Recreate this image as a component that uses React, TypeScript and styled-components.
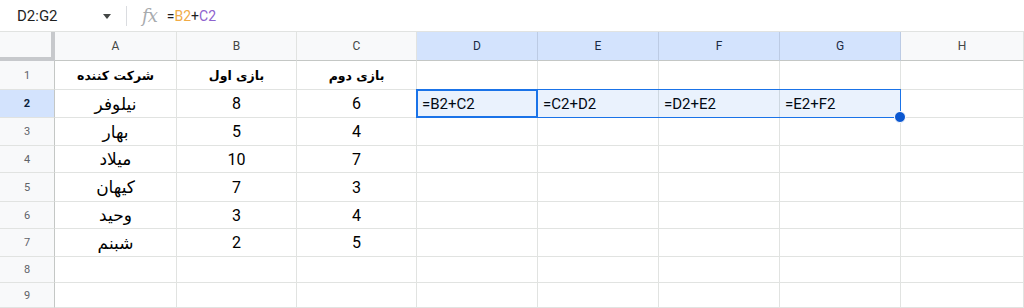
import React from "react"
import styled, { createGlobalStyle } from "styled-components"

const GlobalStyle = createGlobalStyle`
  html, body {
    margin: 0;
    padding: 0;
    background: #fff;
    font-family: Roboto, "Liberation Sans", Arial, sans-serif;
  }
`

const colWidths = [55, 122, 120, 120, 121, 121, 121, 121, 123]
const rowHeights = [29, 29, 28, 28, 27, 29, 27, 28, 26, 25]
const letters = ["A", "B", "C", "D", "E", "F", "G", "H"]

const data: string[][] = [
  ["شرکت کننده", "بازی اول", "بازی دوم", "", "", "", "", ""],
  ["نیلوفر", "8", "6", "=B2+C2", "=C2+D2", "=D2+E2", "=E2+F2", ""],
  ["بهار", "5", "4", "", "", "", "", ""],
  ["میلاد", "10", "7", "", "", "", "", ""],
  ["کیهان", "7", "3", "", "", "", "", ""],
  ["وحید", "3", "4", "", "", "", "", ""],
  ["شبنم", "2", "5", "", "", "", "", ""],
  ["", "", "", "", "", "", "", ""],
  ["", "", "", "", "", "", "", ""],
]

const Page = styled.div`
  width: 1024px;
  height: 308px;
  overflow: hidden;
`

const FormulaBar = styled.div`
  height: 31px;
  display: flex;
  align-items: center;
  border-bottom: 1px solid #e1e3e1;
  font-size: 14px;
  color: #1f1f1f;
`

const NameBox = styled.div`
  width: 86px;
  padding-left: 17px;
  font-size: 15px;
`

const Caret = styled.div`
  width: 0;
  height: 0;
  border-left: 4px solid transparent;
  border-right: 4px solid transparent;
  border-top: 5px solid #444746;
  margin-top: 1px;
`

const Divider = styled.div`
  width: 1px;
  height: 20px;
  background: #dadce0;
  margin: 0 15px 0 15px;
`

const Fx = styled.span`
  font-family: "DejaVu Serif", "Liberation Serif", serif;
  font-style: italic;
  font-size: 18px;
  color: #a8abae;
  letter-spacing: -1px;
  margin-right: 10px;
`

const FormulaText = styled.div`
  font-size: 14px;
  color: #1f1f1f;
`

const Ref = styled.span<{ $color: string }>`
  color: ${({ $color }) => $color};
`

const Grid = styled.div`
  display: grid;
  grid-template-columns: ${colWidths.map(w => `${w}px`).join(" ")};
  grid-template-rows: ${rowHeights.map(h => `${h}px`).join(" ")};
  position: relative;
`

const Placed = styled.div<{ $row: number; $col: number }>`
  grid-row: ${({ $row }) => $row};
  grid-column: ${({ $col }) => $col};
  box-sizing: border-box;
  min-width: 0;
`

const Corner = styled(Placed)`
  background: #f8f9fa;
  border-right: 4px solid #c7c9cc;
  border-bottom: 4px solid #c7c9cc;
`

const ColHeader = styled(Placed)<{ $active?: boolean }>`
  display: flex;
  align-items: center;
  justify-content: center;
  font-size: 12px;
  background: ${({ $active }) => ($active ? "#d3e3fd" : "#f8f9fa")};
  color: ${({ $active }) => ($active ? "#1b2b45" : "#444746")};
  border-right: 1px solid ${({ $active }) => ($active ? "#bccbe4" : "#e1e3e1")};
  border-bottom: 1px solid #c4c7c5;
`

const RowHeader = styled(Placed)<{ $active?: boolean }>`
  display: flex;
  align-items: center;
  justify-content: center;
  font-size: 11px;
  font-weight: ${({ $active }) => ($active ? 700 : 400)};
  background: ${({ $active }) => ($active ? "#d3e3fd" : "#f8f9fa")};
  color: ${({ $active }) => ($active ? "#0b1f3f" : "#5f6368")};
  border-right: 1px solid #c4c7c5;
  border-bottom: 1px solid #e1e3e1;
`

const Cell = styled(Placed)<{ $align: "center" | "left" }>`
  display: flex;
  align-items: center;
  justify-content: ${({ $align }) => ($align === "left" ? "flex-start" : "center")};
  padding: 0 5px;
  font-size: ${({ $align }) => ($align === "left" ? "15px" : "16px")};
  color: #000;
  white-space: nowrap;
  border-right: 1px solid #e1e3e1;
  border-bottom: 1px solid #e1e3e1;
`

// header row is bold and a little smaller so it keeps the narrow width of the original
const Persian = styled.span<{ $heading?: boolean }>`
  font-family: "DejaVu Sans", sans-serif;
  font-size: ${({ $heading }) => ($heading ? "12.5px" : "17px")};
  font-weight: ${({ $heading }) => ($heading ? 700 : 400)};
`

const Selection = styled(Placed)<{ $span: number }>`
  grid-column: ${({ $col, $span }) => `${$col} / span ${$span}`};
  margin: -1px 0 0 -1px;
  border: 1px solid #1a73e8;
  background: rgba(26, 115, 232, 0.09);
  pointer-events: none;
  position: relative;
  z-index: 1;
`

const ActiveCell = styled(Placed)`
  margin: -1px 0 0 -1px;
  border: 2px solid #1a73e8;
  pointer-events: none;
  z-index: 2;
`

const FillHandle = styled.div`
  position: absolute;
  right: -6px;
  bottom: -6px;
  width: 10px;
  height: 10px;
  border-radius: 50%;
  background: #0b57d0;
  border: 1px solid #fff;
`

const isPersian = (s: string) => /[\u0600-\u06ff]/.test(s)

export default function App() {
  return (
    <Page>
      <GlobalStyle />
      <FormulaBar>
        <NameBox>D2:G2</NameBox>
        <Caret />
        <Divider />
        <Fx>fx</Fx>
        <FormulaText>
          =<Ref $color="#f1ab46">B2</Ref>+<Ref $color="#8e63ce">C2</Ref>
        </FormulaText>
      </FormulaBar>
      <Grid>
        <Corner $row={1} $col={1} />
        {letters.map((l, i) => (
          <ColHeader key={l} $row={1} $col={i + 2} $active={i >= 3 && i <= 6}>
            {l}
          </ColHeader>
        ))}
        {data.map((row, r) => (
          <React.Fragment key={`row-${r}`}>
            <RowHeader $row={r + 2} $col={1} $active={r === 1}>
              {r + 1}
            </RowHeader>
            {row.map((v, c) => (
              <Cell
                key={`cell-${r}-${c}`}
                $row={r + 2}
                $col={c + 2}
                $align={v.startsWith("=") ? "left" : "center"}
              >
                {isPersian(v) ? (
                  <Persian dir="rtl" $heading={r === 0}>
                    {v}
                  </Persian>
                ) : (
                  v
                )}
              </Cell>
            ))}
          </React.Fragment>
        ))}
        <Selection $row={3} $col={5} $span={4}>
          <FillHandle />
        </Selection>
        <ActiveCell $row={3} $col={5} />
      </Grid>
    </Page>
  )
}
